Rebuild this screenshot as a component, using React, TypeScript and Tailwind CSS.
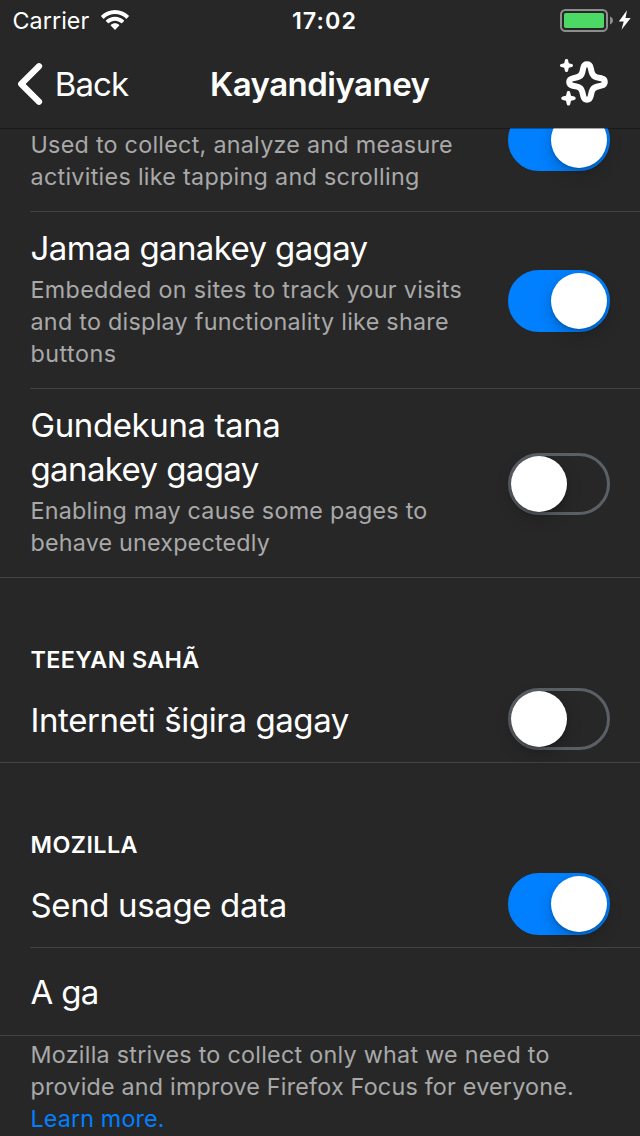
import { useState, type ReactNode } from "react";

function Wifi() {
  return (
    <svg width="28" height="20" viewBox="0 0 28 20" fill="#fff" aria-hidden="true">
      <path d="M14 0C19.3 0 24.2 2.1 27.7 5.5c.3.3.3.7 0 1l-1.8 1.9c-.3.3-.7.3-1 0C22 5.600 18.200 3.900 14 3.900S6 5.600 3.100 8.400c-.3.3-.7.3-1 0L.3 6.500c-.3-.3-.3-.7 0-1C3.800 2.100 8.700 0 14 0Z" />
      <path d="M14 6.700c3.400 0 6.500 1.300 8.900 3.500.3.3.3.7 0 1l-1.800 1.900c-.3.3-.7.3-1 0-1.600-1.500-3.800-2.400-6.100-2.400s-4.500.9-6.100 2.400c-.3.3-.7.3-1 0l-1.800-1.900c-.3-.3-.3-.7 0-1C7.500 8 10.600 6.700 14 6.700Z" />
      <path d="M14 13.300c1.600 0 3 .6 4.100 1.500.3.3.3.7 0 1l-3.600 3.700c-.3.3-.7.3-1 0l-3.600-3.700c-.3-.3-.3-.7 0-1 1.100-.9 2.500-1.500 4.100-1.500Z" />
    </svg>
  );
}

function Battery() {
  return (
    <svg width="72" height="24" viewBox="0 0 72 24" aria-hidden="true">
      <rect x="1" y="1" width="46" height="21" rx="4.500" fill="none" stroke="#8d8d8d" strokeWidth="2" />
      <rect x="4" y="4" width="40" height="15" rx="1.800" fill="#4cd964" />
      <path d="M50 7.500c2 .8 3 2.200 3 4s-1 3.200-3 4Z" fill="#8d8d8d" />
      <path d="M67 1.200 58.800 12.500h4.900L61.500 20.800 70.700 9h-5.200Z" fill="#fff" />
    </svg>
  );
}

function Sparkles() {
  return (
    <svg width="50" height="50" viewBox="0 0 50 50" aria-hidden="true">
      <path
        d="M27 5.200c2.200 0 3.200 1.400 3.700 3.600l1 4.400c.7 3 2.100 4.400 5.100 5.100l4.400 1c4.800 1.100 4.800 6.300 0 7.400l-4.400 1c-3 .7-4.400 2.100-5.100 5.100l-1 4.400c-1.100 4.800-6.300 4.800-7.400 0l-1-4.400c-.7-3-2.100-4.400-5.100-5.100l-4.400-1c-4.800-1.100-4.800-6.300 0-7.400l4.400-1c3-.7 4.400-2.100 5.100-5.100l1-4.400c.5-2.200 1.500-3.600 3.700-3.600Z"
        fill="none"
        stroke="#fff"
        strokeWidth="6"
      />
      <path d="M6.500 0c.8 0 1.400.5 1.600 1.300l.7 2.900 2.900.7c1.700.4 1.700 2.800 0 3.200l-2.900.7-.7 2.900c-.4 1.700-2.800 1.700-3.200 0l-.7-2.900-2.900-.7c-1.700-.4-1.700-2.800 0-3.200l2.900-.7.7-2.900C5.100.5 5.700 0 6.500 0Z" fill="#fff" />
      <path d="M8.500 32c.9 0 1.500.5 1.700 1.400l.8 3.400 3.400.8c1.800.4 1.800 3 0 3.400l-3.400.8-.8 3.400c-.4 1.800-3 1.800-3.400 0l-.8-3.400-3.400-.8c-1.800-.4-1.800-3 0-3.400l3.400-.8.8-3.400C7 32.500 7.600 32 8.500 32Z" fill="#fff" />
    </svg>
  );
}

function Toggle({ initial, label, className = "" }: { initial: boolean; label: string; className?: string }) {
  const [on, setOn] = useState(initial);
  return (
    <button
      type="button"
      role="switch"
      aria-checked={on}
      aria-label={label}
      onClick={() => setOn(!on)}
      className={`flex h-[62px] w-[102px] shrink-0 items-center rounded-full border-[3px] ${
        on ? "justify-end border-[#0080ff] bg-[#0080ff]" : "justify-start border-[#5b5f66] bg-transparent"
      } ${className}`}
    >
      <span className="size-14 rounded-full bg-white shadow-[0_6px_16px_rgba(0,0,0,0.22),0_2px_3px_rgba(0,0,0,0.15)]" />
    </button>
  );
}

const Title = ({ children, className = "" }: { children: ReactNode; className?: string }) => (
  <div className={`text-[33px] leading-[44px] text-white ${className}`}>{children}</div>
);

const Detail = ({ children, className = "" }: { children: ReactNode; className?: string }) => (
  <div className={`text-[23.3px] leading-8 text-[#a9a9a9] ${className}`}>{children}</div>
);

const SectionHeader = ({ children }: { children: ReactNode }) => (
  <h2 className="pt-[66px] pl-[30.5px] text-[23.3px] leading-8 font-semibold text-white">{children}</h2>
);

const Inset = () => <div className="ml-[30px] h-px bg-[#434343]" />;
const Divider = () => <div className="h-px bg-[#434346]" />;

export default function App() {
  return (
    <div className="flex h-[1136px] w-[640px] flex-col overflow-hidden bg-[#272727] font-['Inter',sans-serif] whitespace-nowrap">
      <header className="relative z-10 h-32 shrink-0 bg-[#272727] text-white after:absolute after:inset-x-0 after:top-full after:h-px after:bg-black/35">
        <div className="grid h-10 grid-cols-[1fr_auto_1fr] pt-[5px] text-[23.3px] leading-8">
          <div className="flex pl-[12.5px]">
            <span className="w-[77px] tracking-[0.07px]">Carrier</span>
            <span className="ml-[11.5px] pt-[5px]"><Wifi /></span>
          </div>
          <div className="pl-[9px] font-semibold tracking-[1.05px]">17:02</div>
          <div className="flex justify-end pt-1 pr-2"><Battery /></div>
        </div>
        <div className="grid h-[88px] grid-cols-[210px_220px_1fr] items-start">
          <button type="button" className="flex items-start pl-[17px] pt-[22px] text-[33px] leading-[44px] tracking-[-0.9px]">
            <svg width="26" height="44" viewBox="0 0 26 44" aria-hidden="true">
              <path d="M22 4.200 4.200 22 22 39.800" fill="none" stroke="#fff" strokeWidth="6.200" strokeLinecap="round" strokeLinejoin="round" />
            </svg>
            <span className="ml-[11.7px]">Back</span>
          </button>
          <h1 className="pt-[22px] text-[33px] leading-[44px] font-semibold tracking-[-0.52px]">Kayandiyaney</h1>
          <div className="flex justify-end pt-[19px] pr-[30px]"><Sparkles /></div>
        </div>
      </header>

      <main className="flex-1">
        <div className="flex h-[83px] justify-between pr-[30px] pl-[30.5px]">
          <Detail className="pt-px">
            <div className="tracking-[0.27px]">Used to collect, analyze and measure</div>
            <div className="tracking-[0.3px]">activities like tapping and scrolling</div>
          </Detail>
          <Toggle initial label="Analytics" className="-mt-[19px]" />
        </div>
        <Inset />

        <div className="flex h-[176px] items-center justify-between pr-[30px] pl-[30.5px]">
          <div className="-mt-1">
            <Title><span className="tracking-[-0.62px]">Jamaa ganakey gagay</span></Title>
            <Detail className="pt-1">
              <div className="tracking-[0.32px]">Embedded on sites to track your visits</div>
              <div className="tracking-[0.28px]">and to display functionality like share</div>
              <div className="tracking-[0.5px]">buttons</div>
            </Detail>
          </div>
          <Toggle initial label="Social" className="mt-0.5" />
        </div>
        <Inset />

        <div className="flex h-[188px] items-center justify-between pr-[30px] pl-[30.5px]">
          <div className="-mt-1">
            <Title>
              <div className="tracking-[-0.4px]">Gundekuna tana</div>
              <div className="tracking-[-0.62px]">ganakey gagay</div>
            </Title>
            <Detail className="pt-1">
              <div className="tracking-[0.25px]">Enabling may cause some pages to</div>
              <div className="tracking-[0.2px]">behave unexpectedly</div>
            </Detail>
          </div>
          <Toggle initial={false} label="Other content" className="mt-0.5" />
        </div>
        <Divider />

        <SectionHeader><span className="tracking-[0.36px]">TEEYAN SAHÃ</span></SectionHeader>
        <div className="flex h-[86px] items-center justify-between pr-[30px] pl-[30.5px]">
          <Title className="mt-0.5"><span className="tracking-[-0.4px]">Interneti šigira gagay</span></Title>
          <Toggle initial={false} label="Block web fonts" />
        </div>
        <Divider />

        <SectionHeader><span className="tracking-[0.45px]">MOZILLA</span></SectionHeader>
        <div className="flex h-[86px] items-center justify-between pr-[30px] pl-[30.5px]">
          <Title className="mt-0.5"><span className="tracking-[-0.37px]">Send usage data</span></Title>
          <Toggle initial label="Usage data" />
        </div>
        <Inset />
        <div className="flex h-[87px] items-center px-[30.5px]">
          <Title><span className="tracking-[-0.7px]">A ga</span></Title>
        </div>
        <Divider />
        <Detail className="pt-[3px] pl-[30.5px]">
          <div className="tracking-[0.27px]">Mozilla strives to collect only what we need to</div>
          <div className="tracking-[0.22px]">provide and improve Firefox Focus for everyone.</div>
          <a href="#learn-more" className="block tracking-[0.14px] text-[#0080ff]">Learn more.</a>
        </Detail>
      </main>
    </div>
  );
}
